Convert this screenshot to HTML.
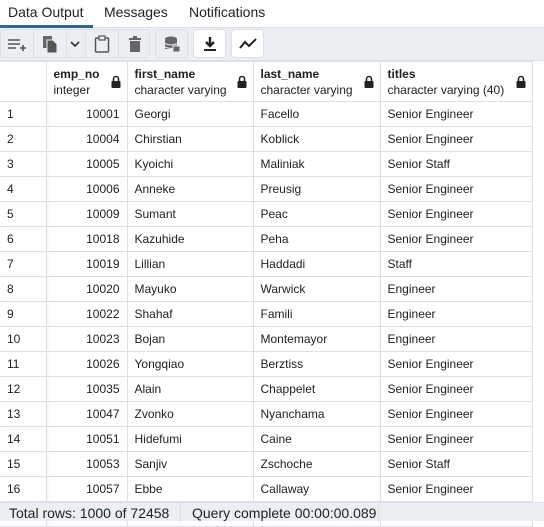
<!DOCTYPE html>
<html><head><style>
*{box-sizing:border-box;margin:0;padding:0}
body{width:544px;height:521px;overflow:hidden;background:#fff;font-family:"Liberation Sans",sans-serif;color:#222;position:relative}
.tabs{position:absolute;top:0;left:0;height:28px;width:544px;border-bottom:1px solid #dde0e6}
.tab{position:absolute;top:4px;font-size:14px;color:#222}
.ul{position:absolute;left:0;top:25px;width:93px;height:3px;background:#326690}
.tb{position:absolute;top:28px;left:0;width:544px;height:33px;background:#ebeef3;border-bottom:1px solid #dde0e6}
.btn{position:absolute;top:1px;height:29px;border:1px solid #dde0e6;border-radius:4px;background:#ebeef3;display:flex;align-items:center;justify-content:center}
.w{background:#fff}
.grp{position:absolute;top:1px;left:0;width:150px;height:29px;border:1px solid #dde0e6;border-radius:4px}
.sep{position:absolute;top:0;width:1px;height:27px;background:#dde0e6}
table{position:absolute;top:61px;left:0;border-collapse:collapse;font-size:12px}
td,th{border:1px solid #dde0e6;height:25px;padding:0 7px;white-space:nowrap}
th{height:40px;text-align:left;font-weight:normal;vertical-align:middle;position:relative;line-height:16px}
th b{font-weight:bold}
td.n{text-align:right}
td:first-child,th:first-child{border-left:none;box-shadow:3px 0 4px -2px rgba(0,0,0,.12)}
.lk{position:absolute;right:6px;top:13px}
.ft{position:absolute;top:502px;left:0;width:544px;height:19px;background:#ebeef3;font-size:14px;border-top:1px solid #dde0e6}
.ft span{position:absolute;top:2px}
</style></head><body>
<div class="tabs"><span class="tab" style="left:8px">Data Output</span><span class="tab" style="left:104px">Messages</span><span class="tab" style="left:189px">Notifications</span></div>
<div class="ul"></div>
<div class="tb">
<div class="grp">
<div class="sep" style="left:32px"></div><div class="sep" style="left:65px"></div><div class="sep" style="left:84px"></div><div class="sep" style="left:117px"></div>
<svg style="position:absolute;left:6px;top:6px" width="20" height="16"><path d="M1 4h12M1 8h12M1 12h8M13 12h6M16 9v6" stroke="#555" stroke-width="1.6" fill="none"/></svg>
<svg style="position:absolute;left:41px;top:5px" width="16" height="18"><rect x="1" y="1" width="9" height="12" fill="#666"/><path d="M5 5h6l4 4v9H5z" fill="#555" stroke="#ebeef3"/></svg>
<svg style="position:absolute;left:69px;top:10px" width="10" height="8"><path d="M1 2l4 4 4-4" stroke="#333" stroke-width="1.6" fill="none"/></svg>
<svg style="position:absolute;left:93px;top:5px" width="16" height="18"><rect x="1.5" y="3" width="13" height="14" rx="1" fill="none" stroke="#555" stroke-width="1.5"/><rect x="5" y="1" width="6" height="4" fill="#ebeef3" stroke="#555" stroke-width="1.2"/></svg>
<svg style="position:absolute;left:127px;top:5px" width="14" height="18"><rect x="1" y="3" width="12" height="2" fill="#666"/><rect x="5" y="1" width="4" height="2" fill="#666"/><rect x="2" y="6" width="10" height="11" fill="#666"/></svg>
</div>
<div class="btn" style="left:155px;width:33px"><svg width="18" height="18"><ellipse cx="8" cy="4" rx="6" ry="2.5" fill="#666"/><rect x="2" y="5" width="12" height="9" fill="#666"/><path d="M2 8.5q6 3 12 0M2 12q6 3 12 0" stroke="#ebeef3" fill="none"/><rect x="10" y="11" width="7" height="6" fill="#666" stroke="#ebeef3"/></svg></div>
<div class="btn w" style="left:193px;width:33px"><svg width="16" height="16"><path d="M8 1v8M4 6l4 4 4-4" stroke="#222" stroke-width="2.4" fill="none"/><rect x="2" y="13" width="12" height="2" fill="#222"/></svg></div>
<div class="btn w" style="left:231px;width:33px"><svg width="18" height="14"><path d="M1 11l5-6 4 4 7-7" stroke="#222" stroke-width="2" fill="none"/></svg></div>
</div>
<table>
<tr><th style="width:46px"></th><th style="width:81px"><b>emp_no</b><br>integer<svg class="lk" width="10" height="13"><path d="M2.5 6V4a2.5 2.5 0 015 0v2" stroke="#222" stroke-width="1.6" fill="none"/><rect x="0.5" y="6" width="9" height="7" rx="1" fill="#222"/></svg></th><th style="width:126px"><b>first_name</b><br>character varying<svg class="lk" width="10" height="13"><path d="M2.5 6V4a2.5 2.5 0 015 0v2" stroke="#222" stroke-width="1.6" fill="none"/><rect x="0.5" y="6" width="9" height="7" rx="1" fill="#222"/></svg></th><th style="width:127px"><b>last_name</b><br>character varying<svg class="lk" width="10" height="13"><path d="M2.5 6V4a2.5 2.5 0 015 0v2" stroke="#222" stroke-width="1.6" fill="none"/><rect x="0.5" y="6" width="9" height="7" rx="1" fill="#222"/></svg></th><th style="width:152px"><b>titles</b><br>character varying (40)<svg class="lk" width="10" height="13"><path d="M2.5 6V4a2.5 2.5 0 015 0v2" stroke="#222" stroke-width="1.6" fill="none"/><rect x="0.5" y="6" width="9" height="7" rx="1" fill="#222"/></svg></th></tr>
<tr><td>1</td><td class="n">10001</td><td>Georgi</td><td>Facello</td><td>Senior Engineer</td></tr>
<tr><td>2</td><td class="n">10004</td><td>Chirstian</td><td>Koblick</td><td>Senior Engineer</td></tr>
<tr><td>3</td><td class="n">10005</td><td>Kyoichi</td><td>Maliniak</td><td>Senior Staff</td></tr>
<tr><td>4</td><td class="n">10006</td><td>Anneke</td><td>Preusig</td><td>Senior Engineer</td></tr>
<tr><td>5</td><td class="n">10009</td><td>Sumant</td><td>Peac</td><td>Senior Engineer</td></tr>
<tr><td>6</td><td class="n">10018</td><td>Kazuhide</td><td>Peha</td><td>Senior Engineer</td></tr>
<tr><td>7</td><td class="n">10019</td><td>Lillian</td><td>Haddadi</td><td>Staff</td></tr>
<tr><td>8</td><td class="n">10020</td><td>Mayuko</td><td>Warwick</td><td>Engineer</td></tr>
<tr><td>9</td><td class="n">10022</td><td>Shahaf</td><td>Famili</td><td>Engineer</td></tr>
<tr><td>10</td><td class="n">10023</td><td>Bojan</td><td>Montemayor</td><td>Engineer</td></tr>
<tr><td>11</td><td class="n">10026</td><td>Yongqiao</td><td>Berztiss</td><td>Senior Engineer</td></tr>
<tr><td>12</td><td class="n">10035</td><td>Alain</td><td>Chappelet</td><td>Senior Engineer</td></tr>
<tr><td>13</td><td class="n">10047</td><td>Zvonko</td><td>Nyanchama</td><td>Senior Engineer</td></tr>
<tr><td>14</td><td class="n">10051</td><td>Hidefumi</td><td>Caine</td><td>Senior Engineer</td></tr>
<tr><td>15</td><td class="n">10053</td><td>Sanjiv</td><td>Zschoche</td><td>Senior Staff</td></tr>
<tr><td>16</td><td class="n">10057</td><td>Ebbe</td><td>Callaway</td><td>Senior Engineer</td></tr>
<tr><td></td><td></td><td></td><td></td><td></td></tr>
</table>
<div class="ft"><span style="left:9px">Total rows: 1000 of 72458</span><div class="sep" style="left:180px;height:19px;top:0"></div><span style="left:192px">Query complete 00:00:00.089</span><div class="sep" style="left:378px;height:19px;top:0"></div></div>
</body></html>
